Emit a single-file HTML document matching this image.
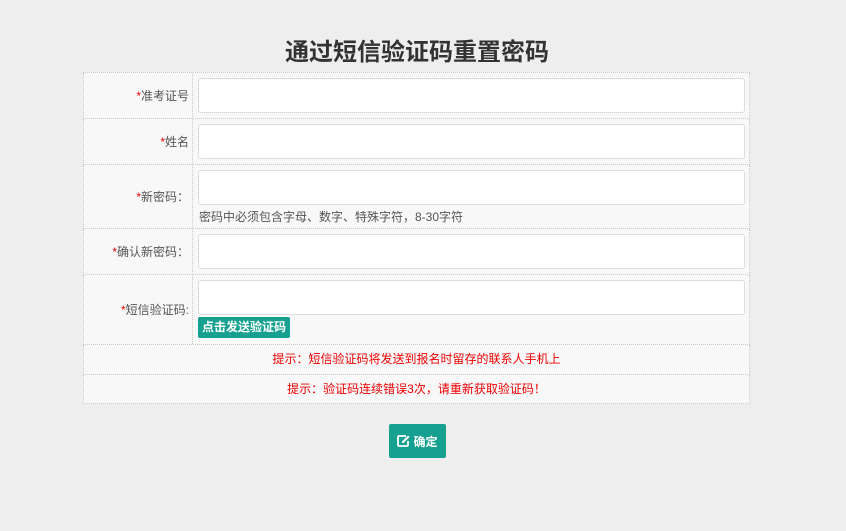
<!DOCTYPE html>
<html><head><meta charset="utf-8"><style>
body{margin:0;background:#eeeeee;font-family:"Liberation Sans","Noto Sans CJK SC",sans-serif;width:846px;height:531px;position:relative;overflow:hidden;color:#555}
h1{position:absolute;left:0;width:834px;top:37px;margin:0;text-align:center;font-size:24px;line-height:32px;font-weight:bold;color:#333}
.t{position:absolute;left:83px;top:72px;width:667px;border-top:1px dotted #c8c8c8;background:#f8f8f8}
.r{position:relative;border-bottom:1px dotted #c8c8c8;border-left:1px dotted #c8c8c8;border-right:1px dotted #c8c8c8;box-sizing:border-box}
.l{position:absolute;left:0;top:0;bottom:0;width:109px;border-right:1px dotted #c8c8c8;text-align:right;font-size:12px;color:#555;display:flex;align-items:center;justify-content:flex-end;padding-right:3px;box-sizing:border-box}
.l i{color:#e00;font-style:normal}
.in{position:absolute;left:114px;width:545px;height:33px;background:#fff;border:1px solid #ddd;border-radius:3px}
.hint{position:absolute;left:115px;font-size:12px;color:#555}
.btn{position:absolute;left:114px;background:#16a08f;color:#fff;font-size:12px;font-weight:bold;padding:0 4px;height:21px;line-height:21px;border-radius:2px}
.tip{text-align:center;color:#e00;font-size:12px;line-height:29px}
.ok{position:absolute;left:389px;top:424px;width:57px;height:34px;background:#16a08f;border-radius:2px;color:#fff;font-size:12px;font-weight:bold;display:flex;align-items:center;justify-content:center;gap:3px}
</style></head><body>
<h1>通过短信验证码重置密码</h1>
<div class="t">
<div class="r" style="height:46px"><div class="l"><i>*</i>准考证号</div><div class="in" style="top:5px"></div></div>
<div class="r" style="height:46px"><div class="l"><i>*</i>姓名</div><div class="in" style="top:5px"></div></div>
<div class="r" style="height:64px"><div class="l"><i>*</i>新密码：</div><div class="in" style="top:5px"></div><div class="hint" style="top:43px">密码中必须包含字母、数字、特殊字符，8-30字符</div></div>
<div class="r" style="height:46px"><div class="l"><i>*</i>确认新密码：</div><div class="in" style="top:5px"></div></div>
<div class="r" style="height:70px"><div class="l"><i>*</i>短信验证码:</div><div class="in" style="top:5px"></div><div class="btn" style="top:42px">点击发送验证码</div></div>
<div class="r tip" style="height:30px">提示：短信验证码将发送到报名时留存的联系人手机上</div>
<div class="r tip" style="height:29px">提示：验证码连续错误3次，请重新获取验证码！</div>
</div>
<div class="ok"><svg width="13" height="12" viewBox="0 0 13 12"><path d="M9 1H2a1 1 0 0 0-1 1v8a1 1 0 0 0 1 1h8a1 1 0 0 0 1-1V6" fill="none" stroke="#fff" stroke-width="1.8"/><path d="M11 0.5l1.5 1.5-6 6H5V6.5z" fill="#fff"/></svg>确定</div>
</body></html>
